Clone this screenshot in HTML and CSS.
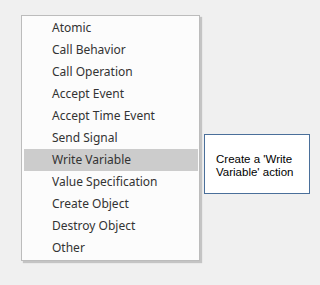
FILE: index.html
```html
<!DOCTYPE html>
<html lang="en">
<head>
    <meta charset="UTF-8">
    <title>Action Menu</title>
    <link rel="stylesheet" href="styles.css">
</head>
<body>

    <div class="menu">
        <div class="item">Atomic</div>
        <div class="item">Call Behavior</div>
        <div class="item">Call Operation</div>
        <div class="item">Accept Event</div>
        <div class="item">Accept Time Event</div>
        <div class="item">Send Signal</div>
        <div class="item active">Write Variable</div>
        <div class="item">Value Specification</div>
        <div class="item">Create Object</div>
        <div class="item">Destroy Object</div>
        <div class="item">Other</div>
    </div>

    <div class="tip">Create a 'Write Variable' action</div>

</body>
</html>
```

FILE: styles.css
```css
body {
    margin: 0;
    width: 320px;
    height: 285px;
    background-color: #f0f0f0;
    font-family: "Noto Sans", Arial, sans-serif;
    display: flex;
    align-items: flex-start;
}

.menu {
    margin: 15px 0 0 21px;
    width: 174px;
    padding: 1px 1px 1px 2px;
    background-color: #fcfcfc;
    border: 1px solid #bcbcbc;
    box-shadow: 2px 2px 1px rgba(0, 0, 0, 0.18);
}

.item {
    height: 22px;
    line-height: 22px;
    padding-left: 28px;
    font-size: 12px;
    color: #333;
}

.active {
    background-color: #cccccc;
}

.tip {
    margin: 134px 0 0 4px;
    width: 106px;
    height: 60px;
    box-sizing: border-box;
    padding: 18px 0 0 11px;
    background-color: #fff;
    border: 1px solid #4a6f9a;
    font-family: "Liberation Sans", Arial, sans-serif;
    font-size: 11.5px;
    line-height: 13px;
    color: #000;
}
```
